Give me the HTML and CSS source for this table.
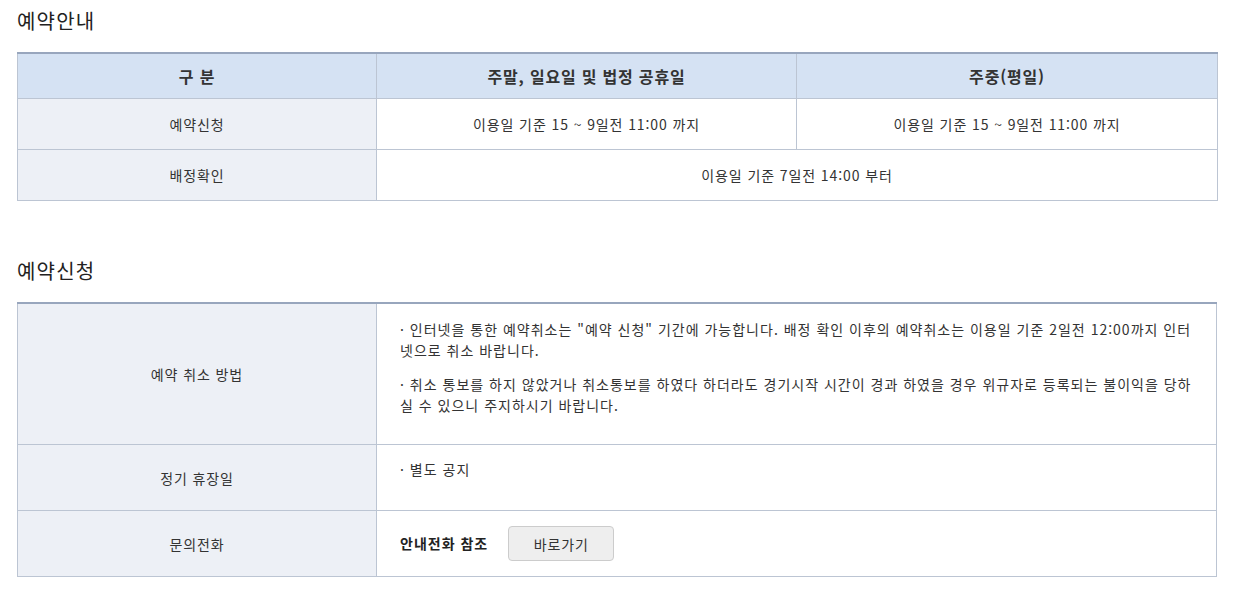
FILE: index.html
```html
<!DOCTYPE html>
<html lang="ko">
<head>
<meta charset="utf-8">
<link rel="stylesheet" href="styles.css">
</head>
<body>
<section class="sec">
  <h2 class="title">예약안내</h2>
  <table class="tbl">
    <colgroup><col class="c1"><col class="c2"><col class="c3"></colgroup>
    <thead>
      <tr class="head">
        <th>구 분</th>
        <th>주말, 일요일 및 법정 공휴일</th>
        <th>주중(평일)</th>
      </tr>
    </thead>
    <tbody>
      <tr class="row">
        <th class="lbl">예약신청</th>
        <td class="ctr">이용일 기준 15 ~ 9일전 11:00 까지</td>
        <td class="ctr">이용일 기준 15 ~ 9일전 11:00 까지</td>
      </tr>
      <tr class="row">
        <th class="lbl">배정확인</th>
        <td class="ctr" colspan="2">이용일 기준 7일전 14:00 부터</td>
      </tr>
    </tbody>
  </table>
</section>
<section class="sec sec2">
  <h2 class="title">예약신청</h2>
  <table class="tbl">
    <colgroup><col class="c1"><col></colgroup>
    <tbody>
      <tr class="r-cancel">
        <th class="lbl">예약 취소 방법</th>
        <td class="txt">
          <p>· 인터넷을 통한 예약취소는 "예약 신청" 기간에 가능합니다. 배정 확인 이후의 예약취소는 이용일 기준 2일전 12:00까지 인터넷으로 취소 바랍니다.</p>
          <p>· 취소 통보를 하지 않았거나 취소통보를 하였다 하더라도 경기시작 시간이 경과 하였을 경우 위규자로 등록되는 불이익을 당하실 수 있으니 주지하시기 바랍니다.</p>
        </td>
      </tr>
      <tr class="r-holiday">
        <th class="lbl">정기 휴장일</th>
        <td class="txt"><p>· 별도 공지</p></td>
      </tr>
      <tr class="r-call">
        <th class="lbl">문의전화</th>
        <td class="txt">
          <div class="call">
            <strong class="call-lbl">안내전화 참조</strong>
            <button class="btn" type="button">바로가기</button>
          </div>
        </td>
      </tr>
    </tbody>
  </table>
</section>
</body>
</html>
```
FILE: styles.css
```css
* { box-sizing: border-box; }
html, body { margin: 0; padding: 0; background: #fff; }
body {
  font-family: "Noto Sans CJK KR", "Noto Sans", sans-serif;
  color: #333;
  font-size: 14px;
  letter-spacing: 0.9px;
  padding: 6px 20px 0 17px;
}
.title {
  margin: 0;
  font-size: 20px;
  font-weight: 400;
  line-height: 30px;
  color: #222;
  letter-spacing: 1.2px;
}
.sec2 { margin-top: 55px; }
.tbl {
  width: 1200px;
  border-collapse: collapse;
  table-layout: fixed;
  margin-top: 16px;
  border-top: 2px solid #98a6bd;
}
.c1 { width: 359px; }
.c2 { width: 420px; }
.c3 { width: 421px; }
.tbl th, .tbl td {
  border: 1px solid #bcc5d3;
  padding: 0;
}
.tbl tr:first-child th, .tbl tr:first-child td { border-top: 0; }
.head th {
  height: 45px;
  background: #d5e2f3;
  font-size: 16px;
  font-weight: 700;
  color: #333;
  text-align: center;
  line-height: 20px;
  letter-spacing: 0.8px;
}
.lbl {
  background: #edf0f6;
  font-weight: 400;
  text-align: center;
  color: #333;
}
.row th, .row td { height: 51px; }
.ctr { text-align: center; }
.txt {
  vertical-align: top;
  padding: 7px 22px 0 23px !important;
  line-height: 21px;
  letter-spacing: 1px;
}
.txt p { margin: 8px 0 13px; }
.r-cancel th, .r-cancel td { height: 142px; }
.r-cancel .txt p:last-child { margin-bottom: 0; }
.r-holiday th, .r-holiday td { height: 66px; }
.r-holiday .txt { padding-top: 6px !important; }
.r-call th, .r-call td { height: 66px; }
.r-call .txt { vertical-align: middle; padding-top: 0 !important; }
.call { display: flex; align-items: center; gap: 20px; }
.call-lbl { font-weight: 700; font-size: 14px; color: #222; }
.btn {
  width: 106px;
  height: 35px;
  background: #eee;
  border: 1px solid #ccc;
  border-radius: 4px;
  font-family: inherit;
  font-size: 14px;
  letter-spacing: 0.9px;
  color: #333;
  padding: 0;
}
```
